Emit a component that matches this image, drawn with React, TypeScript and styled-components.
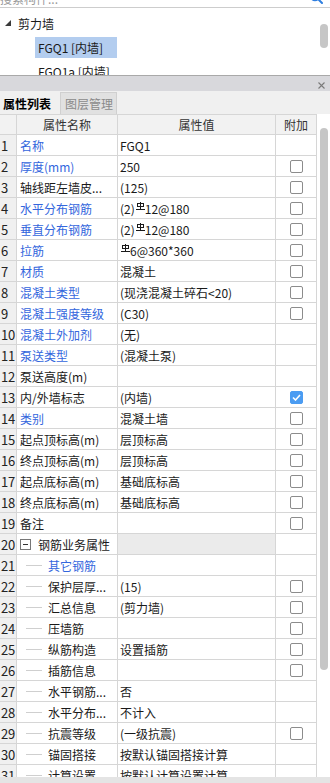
import React from "react";
import styled, { createGlobalStyle, css } from "styled-components";

const GlobalStyle = createGlobalStyle`
  html, body { margin: 0; padding: 0; background: #fff; }
  body {
    font-family: "Noto Sans CJK SC", "Noto Sans", sans-serif;
    font-size: 12px;
    color: #1a1a1a;
  }
  * { box-sizing: border-box; }
`;

const BLUE = "#3366dd";
const LINE = "#d6d6d6";

const Page = styled.div`
  width: 330px;
  height: 783px;
  overflow: hidden;
  display: flex;
  flex-direction: column;
  background: #fff;
`;

const SearchBar = styled.div`
  height: 8px;
  flex: none;
  display: flex;
  align-items: flex-end;
  justify-content: space-between;
  overflow: hidden;
  border-bottom: 1px solid #cdcdcd;
`;

const SearchText = styled.span`
  line-height: 14px;
  margin-bottom: 1px;
  color: #9a9a9a;
  white-space: nowrap;
`;

const SearchIcon = styled.svg`
  flex: none;
  width: 14px;
  height: 14px;
  margin: 0 7px 3px 0;
`;

const TreePanel = styled.div`
  height: 67px;
  flex: none;
  display: flex;
`;

const TreeList = styled.div`
  width: 317px;
  padding-top: 3px;
  display: flex;
  flex-direction: column;
  overflow: hidden;
`;

const TreeNode = styled.div<{ $indent: number }>`
  height: 24px;
  flex: none;
  display: flex;
  align-items: center;
  padding-left: ${(p) => p.$indent}px;
  white-space: nowrap;
`;

const Caret = styled.svg`
  width: 6px;
  height: 6px;
  margin-right: 7px;
`;

const TreeLabel = styled.span<{ $selected?: boolean }>`
  height: 21px;
  line-height: 21px;
  padding: 0 14px 0 3px;
  ${(p) =>
    p.$selected &&
    css`
      background: #b3cdef;
    `}
`;

const ScrollColumn = styled.div<{ $top: number }>`
  width: 13px;
  flex: none;
  padding-top: ${(p) => p.$top}px;
  padding-left: 3px;
  background: #fff;
`;

const Thumb = styled.div<{ $height: number }>`
  width: 8px;
  height: ${(p) => p.$height}px;
  border-radius: 4px;
  background: #c6c6c6;
`;

const Divider = styled.div`
  height: 1px;
  flex: none;
  background: #a9a9a9;
`;

const TitleBar = styled.div`
  height: 15px;
  flex: none;
  background: #d8d8dc;
  display: flex;
  align-items: center;
  justify-content: flex-end;
  padding-right: 5px;
`;

const CloseMark = styled.svg`
  width: 7px;
  height: 7px;
  margin-top: 4px;
`;

const TabStrip = styled.div`
  height: 23px;
  flex: none;
  background: #f0f0f0;
  display: flex;
  align-items: flex-end;
  gap: 2px;
`;

const Tab = styled.div<{ $active?: boolean }>`
  height: 22px;
  display: flex;
  align-items: center;
  padding: 0 6px 0 3px;
  white-space: nowrap;
  ${(p) =>
    p.$active
      ? css`
          width: 58px;
          color: #000;
          font-weight: 600;
          background: #f0f0f0;
        `
      : css`
          width: 57px;
          color: #8a8a8a;
          background: #e1e1e1;
          border: 1px solid #d0d0d0;
          border-bottom: none;
          padding-left: 4px;
        `}
`;

const Grid = styled.div`
  flex: 1;
  min-height: 0;
  display: flex;
  overflow: hidden;
`;

const Table = styled.div`
  width: 317px;
  flex: none;
  display: flex;
  flex-direction: column;
`;

const rowGrid = css`
  display: grid;
  grid-template-columns: 17px 101px 158px 41px;
  height: 21px;
  flex: none;
  border-bottom: 1px solid ${LINE};
`;

const HeaderRow = styled.div`
  ${rowGrid}
  border-top: 1px solid ${LINE};
  background: #f2f2f2;
  color: #333;
`;

const HeadCell = styled.div`
  display: flex;
  align-items: center;
  justify-content: center;
  border-right: 1px solid ${LINE};
  white-space: nowrap;
`;

const Row = styled.div`
  ${rowGrid}
`;

const Cell = styled.div`
  display: flex;
  align-items: center;
  border-right: 1px solid ${LINE};
  white-space: nowrap;
  overflow: hidden;
`;

const NumCell = styled(Cell)`
  background: #f0f0f0;
  padding-left: 1px;
  font-size: 13px;
  color: #222;
  letter-spacing: -0.3px;
`;

const NameCell = styled(Cell)<{ $blue?: boolean }>`
  padding-left: 3px;
  color: ${(p) => (p.$blue ? BLUE : "#1a1a1a")};
`;

const ValueCell = styled(Cell)<{ $group?: boolean }>`
  padding-left: 2px;
  background: ${(p) => (p.$group ? "#ebebeb" : "#fff")};
`;

const AddCell = styled(Cell)`
  justify-content: center;
`;

const CheckBox = styled.span<{ $checked?: boolean }>`
  width: 13px;
  height: 13px;
  border-radius: 2px;
  display: flex;
  align-items: center;
  justify-content: center;
  ${(p) =>
    p.$checked
      ? css`
          background: #4b9cf2;
          border: 1px solid #4b9cf2;
        `
      : css`
          background: #fff;
          border: 1px solid #8c8c8c;
        `}
`;

const TreeLine = styled.span`
  width: 16px;
  height: 1px;
  background: #cfcfcf;
  margin: 0 6px 0 6px;
  flex: none;
`;

const Toggle = styled.span`
  width: 11px;
  height: 11px;
  border: 1px solid #777;
  background: #fff;
  display: flex;
  align-items: center;
  justify-content: center;
  margin-right: 7px;
  flex: none;
  &::after {
    content: "";
    width: 5px;
    height: 1px;
    background: #333;
  }
`;

const ChildLabel = styled.span<{ $blue?: boolean }>`
  color: ${(p) => (p.$blue ? BLUE : "#1a1a1a")};
`;

const Mark = styled.svg`
  width: 9px;
  height: 8px;
  margin: 0 0 5px 1px;
  flex: none;
`;

const BottomBar = styled.div`
  height: 6px;
  flex: none;
  background: #e4e4e4;
`;

const Rebar = () => (
  <Mark viewBox="0 0 9 8" shapeRendering="crispEdges">
    <path d="M1.5 1.5h6v3h-6z M4.5 0v7 M0 7.5h9" fill="none" stroke="#1a1a1a" strokeWidth="1" />
  </Mark>
);

type Check = "none" | "off" | "on";
type RowData = {
  name: string;
  value?: React.ReactNode;
  blue?: boolean;
  check: Check;
  kind?: "group" | "child";
};

const rows: RowData[] = [
  { name: "名称", value: "FGQ1", blue: true, check: "none" },
  { name: "厚度(mm)", value: "250", blue: true, check: "off" },
  { name: "轴线距左墙皮...", value: "(125)", check: "off" },
  { name: "水平分布钢筋", value: <>(2)<Rebar />12@180</>, blue: true, check: "off" },
  { name: "垂直分布钢筋", value: <>(2)<Rebar />12@180</>, blue: true, check: "off" },
  { name: "拉筋", value: <><Rebar />6@360*360</>, blue: true, check: "off" },
  { name: "材质", value: "混凝土", blue: true, check: "off" },
  { name: "混凝土类型", value: "(现浇混凝土碎石<20)", blue: true, check: "off" },
  { name: "混凝土强度等级", value: "(C30)", blue: true, check: "off" },
  { name: "混凝土外加剂", value: "(无)", blue: true, check: "none" },
  { name: "泵送类型", value: "(混凝土泵)", blue: true, check: "none" },
  { name: "泵送高度(m)", value: "", check: "none" },
  { name: "内/外墙标志", value: "(内墙)", check: "on" },
  { name: "类别", value: "混凝土墙", blue: true, check: "off" },
  { name: "起点顶标高(m)", value: "层顶标高", check: "off" },
  { name: "终点顶标高(m)", value: "层顶标高", check: "off" },
  { name: "起点底标高(m)", value: "基础底标高", check: "off" },
  { name: "终点底标高(m)", value: "基础底标高", check: "off" },
  { name: "备注", value: "", check: "off" },
  { name: "钢筋业务属性", kind: "group", check: "none" },
  { name: "其它钢筋", kind: "child", blue: true, check: "none" },
  { name: "保护层厚...", value: "(15)", kind: "child", check: "off" },
  { name: "汇总信息", value: "(剪力墙)", kind: "child", check: "off" },
  { name: "压墙筋", value: "", kind: "child", check: "off" },
  { name: "纵筋构造", value: "设置插筋", kind: "child", check: "off" },
  { name: "插筋信息", value: "", kind: "child", check: "off" },
  { name: "水平钢筋...", value: "否", kind: "child", check: "none" },
  { name: "水平分布...", value: "不计入", kind: "child", check: "none" },
  { name: "抗震等级", value: "(一级抗震)", kind: "child", check: "off" },
  { name: "锚固搭接", value: "按默认锚固搭接计算", kind: "child", check: "none" },
  { name: "计算设置", value: "按默认计算设置计算", kind: "child", check: "none" },
];

const CheckMark = () => (
  <svg width="9" height="7" viewBox="0 0 9 7">
    <path d="M1 3.5 L3.5 6 L8 1" fill="none" stroke="#fff" strokeWidth="1.6" />
  </svg>
);

export default function App() {
  return (
    <Page>
      <GlobalStyle />
      <SearchBar>
        <SearchText>搜索构件...</SearchText>
        <SearchIcon viewBox="0 0 14 14">
          <circle cx="6" cy="6" r="4.5" fill="none" stroke="#2f7fe0" strokeWidth="1.5" />
          <path d="M9.3 9.3 L13 13" stroke="#2f7fe0" strokeWidth="2" strokeLinecap="round" />
        </SearchIcon>
      </SearchBar>
      <TreePanel>
        <TreeList>
          <TreeNode $indent={5}>
            <Caret viewBox="0 0 6 6">
              <polygon points="6,0 6,6 0,6" fill="#3a3a3a" />
            </Caret>
            <span>剪力墙</span>
          </TreeNode>
          <TreeNode $indent={35}>
            <TreeLabel $selected>FGQ1 [内墙]</TreeLabel>
          </TreeNode>
          <TreeNode $indent={35}>
            <TreeLabel>FGQ1a [内墙]</TreeLabel>
          </TreeNode>
        </TreeList>
        <ScrollColumn $top={16}>
          <Thumb $height={24} />
        </ScrollColumn>
      </TreePanel>
      <Divider />
      <TitleBar>
        <CloseMark viewBox="0 0 7 7">
          <path d="M0.5 0.5 L6.5 6.5 M6.5 0.5 L0.5 6.5" stroke="#7a7a7a" strokeWidth="1.1" />
        </CloseMark>
      </TitleBar>
      <TabStrip>
        <Tab $active>属性列表</Tab>
        <Tab>图层管理</Tab>
      </TabStrip>
      <Grid>
        <Table>
          <HeaderRow>
            <HeadCell />
            <HeadCell>属性名称</HeadCell>
            <HeadCell>属性值</HeadCell>
            <HeadCell>附加</HeadCell>
          </HeaderRow>
          {rows.map((r, i) => (
            <Row key={i}>
              <NumCell>{i + 1}</NumCell>
              {r.kind === "group" ? (
                <NameCell>
                  <Toggle />
                  {r.name}
                </NameCell>
              ) : r.kind === "child" ? (
                <NameCell>
                  <TreeLine />
                  <ChildLabel $blue={r.blue}>{r.name}</ChildLabel>
                </NameCell>
              ) : (
                <NameCell $blue={r.blue}>{r.name}</NameCell>
              )}
              <ValueCell $group={r.kind === "group"}>{r.value}</ValueCell>
              <AddCell>
                {r.check !== "none" && (
                  <CheckBox $checked={r.check === "on"}>{r.check === "on" && <CheckMark />}</CheckBox>
                )}
              </AddCell>
            </Row>
          ))}
        </Table>
        <ScrollColumn $top={14}>
          <Thumb $height={542} />
        </ScrollColumn>
      </Grid>
      <BottomBar />
    </Page>
  );
}
